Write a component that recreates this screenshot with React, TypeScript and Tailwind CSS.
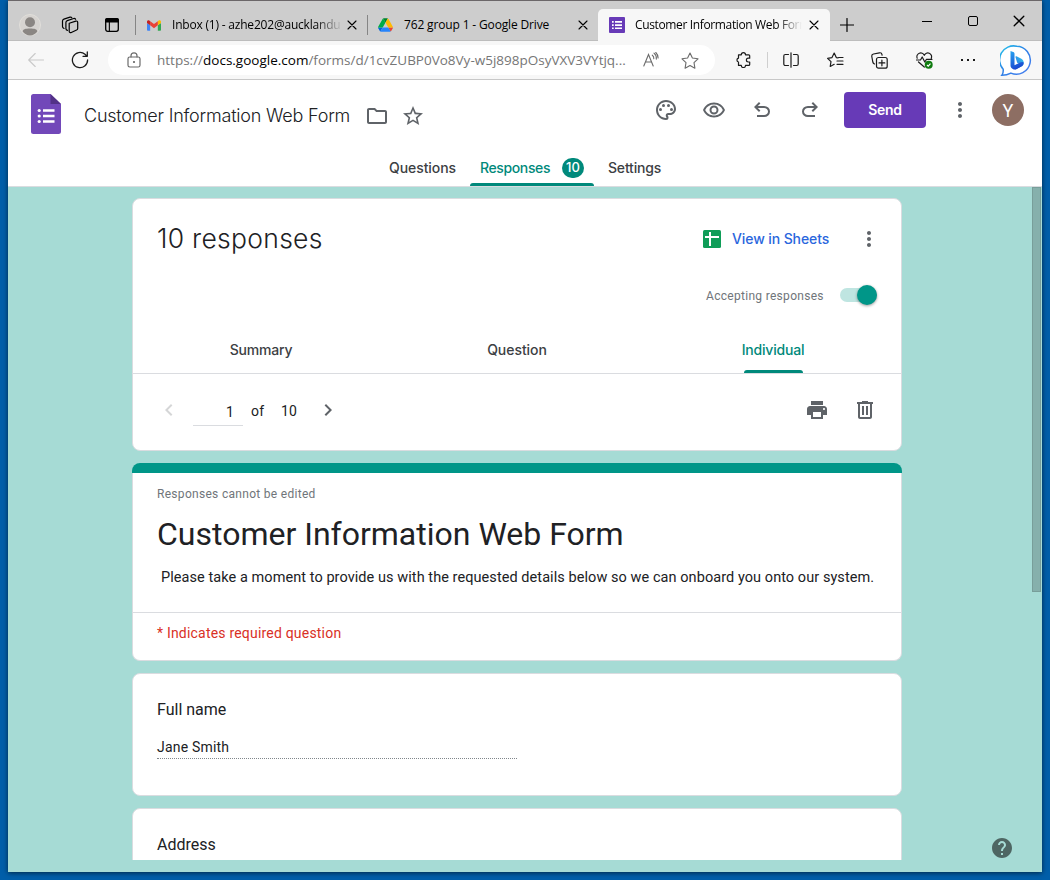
import React from "react";
import {
  MdOutlinePalette,
  MdOutlineRemoveRedEye,
  MdOutlineFolder,
  MdStarBorder,
  MdMoreVert,
  MdPrint,
  MdChevronLeft,
  MdChevronRight,
  MdHelp,
} from "react-icons/md";

type StrokeProps = {
  className: string;
  viewBox: string;
  width?: number;
  children: React.ReactNode;
};

function Stroke({ className, viewBox, width = 1, children }: StrokeProps) {
  return (
    <svg
      className={className}
      viewBox={viewBox}
      fill="none"
      stroke="currentColor"
      strokeWidth={width}
      strokeLinecap="round"
      strokeLinejoin="round"
    >
      {children}
    </svg>
  );
}

function CloseGlyph({ className }: { className: string }) {
  return (
    <Stroke className={className} viewBox="0 0 10 10" width={1.1}>
      <path d="M1 1l8 8M9 1l-8 8" />
    </Stroke>
  );
}

function GmailLogo() {
  return (
    <svg className="h-[11px] w-[14px] shrink-0" viewBox="52 42 88 66">
      <path fill="#4285f4" d="M58 108h14V74L52 59v43c0 3.32 2.69 6 6 6" />
      <path fill="#34a853" d="M120 108h14c3.32 0 6-2.69 6-6V59l-20 15" />
      <path fill="#fbbc04" d="M120 48v26l20-15v-8c0-7.42-8.47-11.65-14.4-7.2" />
      <path fill="#ea4335" d="M72 74V48l24 18 24-18v26L96 92" />
      <path fill="#c5221f" d="M52 51v8l20 15V48l-5.6-4.2c-5.94-4.45-14.4-.22-14.4 7.2" />
    </svg>
  );
}

function DriveLogo() {
  return (
    <svg className="h-[14px] w-[15px] shrink-0" viewBox="0 0 87.3 78">
      <path fill="#0066da" d="m6.6 66.85 3.85 6.65c.8 1.4 1.95 2.5 3.3 3.3l13.75-23.8h-27.5c0 1.55.4 3.1 1.2 4.5z" />
      <path fill="#00ac47" d="m43.65 25-13.75-23.8c-1.35.8-2.5 1.9-3.3 3.3l-25.4 44a9.06 9.06 0 0 0-1.2 4.5h27.5z" />
      <path fill="#ea4335" d="m73.55 76.8c1.35-.8 2.5-1.9 3.3-3.3l1.6-2.75 7.65-13.25c.8-1.4 1.2-2.95 1.2-4.5h-27.502l5.852 11.5z" />
      <path fill="#00832d" d="m43.65 25 13.75-23.8c-1.35-.8-2.9-1.2-4.5-1.2h-18.5c-1.6 0-3.15.45-4.5 1.2z" />
      <path fill="#2684fc" d="m59.8 53h-32.3l-13.75 23.8c1.35.8 2.9 1.2 4.5 1.2h50.8c1.6 0 3.15-.45 4.5-1.2z" />
      <path fill="#ffba00" d="m73.4 26.5-12.7-22c-.8-1.4-1.95-2.5-3.3-3.3l-13.75 23.8 16.15 28h27.45c0-1.55-.4-3.1-1.2-4.5z" />
    </svg>
  );
}

function FormsFavicon() {
  return (
    <svg className="h-4 w-4 shrink-0" viewBox="0 0 16 16">
      <rect width="16" height="16" rx="1" fill="#673ab7" />
      <path fill="#fff" d="M3 4h1.7v1.7H3zM6 4h7v1.7H6zM3 7.2h1.7v1.7H3zM6 7.2h7v1.7H6zM3 10.4h1.7v1.7H3zM6 10.4h7v1.7H6z" />
    </svg>
  );
}

function BingLogo() {
  return (
    <svg className="h-[32px] w-[32px] shrink-0" viewBox="0 0 32 32">
      <defs>
        <linearGradient id="ring" x1="0" y1="0" x2="1" y2="1">
          <stop offset="0" stopColor="#22c4ea" />
          <stop offset="0.5" stopColor="#2f7fe6" />
          <stop offset="1" stopColor="#4a7ff0" />
        </linearGradient>
        <linearGradient id="bee" x1="0" y1="0" x2="0.3" y2="1">
          <stop offset="0" stopColor="#27a5f2" />
          <stop offset="1" stopColor="#1b49d0" />
        </linearGradient>
        <linearGradient id="bowl" x1="1" y1="0" x2="0" y2="1">
          <stop offset="0" stopColor="#35c9f0" />
          <stop offset="1" stopColor="#2565e0" />
        </linearGradient>
      </defs>
      <path
        d="M16.500 1.200a14 14 0 1 1-5.600 26.900c-2.600 1.400-5.600 2.200-9 2.200 1.300-1.600 1.500-3.400 1.300-6A14 14 0 0 1 16.500 1.200z"
        fill="#fff"
        stroke="url(#ring)"
        strokeWidth="1.500"
      />
      <path fill="url(#bowl)" d="M15.500 12.200c-.3-.8.3-1.200 1-.9l4.400 2.200c1.800.9 2.800 2.300 2.800 4.200 0 1.300-.4 2.300-1.200 3.200l-8 3.900 3.900-4.700 1.500-1.100-2.700-1.300z" />
      <path fill="url(#bee)" d="M10.500 6l2.700.9c1 .4 1.300 1 1.300 1.900v11.400l4.500-2.300c2.400-1 4.600-1.100 4.700-.2 0 1.700-.9 2.800-2.400 3.700l-4.400 2.600c-1.300.8-2.800.8-4.100 0-1.500-.9-2.300-1.900-2.300-3.400z" />
    </svg>
  );
}

function TabStrip() {
  return (
    <div className="flex h-[41px] shrink-0 items-start border-t border-[#6b6769] bg-[#cdcdcd] text-black">
      <div className="flex h-[40px] w-full items-start border-b border-[#bdbdbd] pt-[8px]">
        <div className="flex h-[32px] items-center">
          <svg className="ml-[11px] h-[22px] w-[22px] shrink-0" viewBox="0 0 22 22">
            <circle cx="11" cy="11" r="10.500" fill="#d6d3d0" stroke="#e0deda" />
            <circle cx="11" cy="8.200" r="5" fill="#8a8683" />
            <path fill="#8a8683" d="M3.600 17.200c1-2 2.600-2.600 7.400-2.600s6.400.6 7.400 2.600c-1.600 2.600-4.400 4.200-7.400 4.200s-5.800-1.600-7.400-4.200z" />
          </svg>
          <Stroke className="ml-[20px] h-[18px] w-[18px] shrink-0" viewBox="0 0 18 18" width={1.2}>
            <path d="M8.200 7.200l6.600-2.100c1-.3 1.900.3 1.900 1.300v6c0 .8-.4 1.300-1.100 1.600l-5.300 2.500c-1 .4-2.100-.2-2.100-1.300z" />
            <path d="M6.500 14.300c-1-.2-1.600-.9-1.600-1.900V6.500c0-1 .5-1.600 1.400-1.900l6.400-2.100c.9-.2 1.500.1 1.900.8" />
            <path d="M3 12.500c-.9-.3-1.500-.9-1.500-1.900V4.900c0-.9.500-1.500 1.400-1.800L9 1.100c.8-.2 1.400 0 1.800.7" />
          </Stroke>
          <svg className="ml-[26px] h-[14px] w-[14px] shrink-0" viewBox="0 0 14 14">
            <rect x="0.700" y="0.700" width="12.600" height="12.600" rx="2" fill="none" stroke="#000" strokeWidth="1.300" />
            <path d="M2 0h10a2 2 0 0 1 2 2v2.600H0V2a2 2 0 0 1 2-2zM3.800 4h1.100v9.500H3.800z" />
          </svg>
          <div className="ml-[16px] h-[20px] w-px bg-[#858585]" />
        </div>

        <div className="flex h-[32px] items-center font-['Open_Sans',sans-serif] text-[12px] whitespace-nowrap">
          <div className="flex w-[231px] items-center pl-[11px]">
            <GmailLogo />
            <span className="ml-[11px] w-[168px] bg-gradient-to-r from-black from-85% to-black/10 bg-clip-text tracking-[-0.2px] text-transparent">
              Inbox (1) - azhe202@aucklandu
            </span>
            <CloseGlyph className="ml-[7px] h-[10px] w-[10px]" />
          </div>
          <div className="h-[20px] w-px bg-[#858585]" />
          <div className="flex w-[230px] items-center pl-[10px]">
            <DriveLogo />
            <span className="ml-[11px] w-[168px] tracking-[-0.15px]">762 group 1 - Google Drive</span>
            <CloseGlyph className="ml-[6px] h-[10px] w-[10px]" />
          </div>
          <div className="flex h-[32px] w-[232px] items-center rounded-t-[5px] bg-[#f7f7f7] pl-[11px]">
            <FormsFavicon />
            <span className="ml-[10px] w-[167px] overflow-hidden bg-gradient-to-r from-black from-85% to-transparent bg-clip-text tracking-[-0.36px] text-transparent">
              Customer Information Web Form
            </span>
            <CloseGlyph className="ml-[7px] h-[10px] w-[10px]" />
          </div>
          <Stroke className="ml-[10px] h-[14px] w-[14px]" viewBox="0 0 14 14" width={1.2}>
            <path d="M7 .5v13M.5 7h13" />
          </Stroke>
        </div>

        <div className="ml-[68px] flex h-[24px] items-center">
          <div className="h-px w-[10px] bg-black" />
          <div className="ml-[36px] h-[10px] w-[10px] rounded-[2px] border border-black" />
          <CloseGlyph className="ml-[35px] h-[12px] w-[12px]" />
        </div>
      </div>
    </div>
  );
}

function AddressBar() {
  return (
    <div className="flex h-[39px] shrink-0 items-center border-b border-[#c8c8c8] bg-[#f7f7f7] text-[#1b1b1b]">
      <Stroke className="ml-[20px] h-[16px] w-[16px] shrink-0 text-[#c9c9c9]" viewBox="0 0 16 16" width={1.1}>
        <path d="M15.500 8H.8M7.200 1.500L.7 8l6.500 6.500" />
      </Stroke>
      <Stroke className="ml-[27px] h-[18px] w-[18px] shrink-0" viewBox="0 0 18 18" width={1.3}>
        <path d="M16.600 9a7.600 7.600 0 1 1-2.600-5.700l2 1.900M16.300 1v4.300h-4.300" />
      </Stroke>

      <div className="ml-[19px] flex h-[30px] w-[607px] items-center rounded-full bg-white pl-[19px]">
        <Stroke className="h-[16px] w-[14px] shrink-0 text-[#6b6b6b]" viewBox="0 0 14 16" width={1.2}>
          <rect x="1" y="5" width="12" height="10" rx="1.800" />
          <path d="M4 5V3.800a3 3 0 0 1 6 0V5" />
          <circle cx="7" cy="10" r="0.500" fill="currentColor" />
        </Stroke>
        <span className="ml-[16px] w-[470px] font-['Open_Sans',sans-serif] text-[13.500px] whitespace-nowrap text-[#767676]">
          https://<span className="text-black">docs.google.com</span>/forms/d/1cvZUBP0Vo8Vy-w5j898pOsyVXV3VYtjq...
        </span>
        <svg className="ml-[16px] h-[16px] w-[16px] shrink-0 text-[#6b6b6b]" viewBox="0 0 16 16" fill="none" stroke="currentColor" strokeWidth="1.100" strokeLinecap="round">
          <path d="M.8 14L5.500 2.500 10.200 14M2.400 10h6.200" />
          <path d="M9.300 3.200a4 4 0 0 1 1.500 3.600M11 1.200a6.500 6.500 0 0 1 2.300 6" />
          <path d="M12.800 .5a8 8 0 0 1 2.300 5.500" />
        </svg>
        <Stroke className="ml-[22px] h-[17px] w-[18px] shrink-0 text-[#6b6b6b]" viewBox="0 0 18 17" width={1.1}>
          <path d="M9 1l2.400 5 5.600.8-4 3.900.9 5.500L9 13.600l-4.900 2.600.9-5.500-4-3.900L6.600 6z" />
        </Stroke>
      </div>

      <Stroke className="ml-[21px] h-[16px] w-[16px] shrink-0" viewBox="0 0 16 16" width={1.2}>
        <path d="M2.500 2.800H5.300a2.100 2.100 0 0 1 4.200 0h3.200a1 1 0 0 1 1 1v2.400h-1.400a1.900 1.900 0 0 0 0 3.800h1.400v2.400a1 1 0 0 1-1 1H9.500a2.100 2.100 0 0 1-4.200 0H2.500V10a2 2 0 0 1 0-3.900z" />
      </Stroke>
      <div className="ml-[15px] h-[16px] w-px bg-[#cfcfcf]" />
      <Stroke className="ml-[15px] h-[16px] w-[16px] shrink-0" viewBox="0 0 16 16" width={1.2}>
        <path d="M5.500 2.500H2.300A1.500 1.500 0 0 0 .8 4v8a1.500 1.500 0 0 0 1.500 1.500h3.200M10.500 2.500h3.200A1.500 1.500 0 0 1 15.200 4v8a1.500 1.500 0 0 1-1.500 1.500h-3.200M8 .8v14.400" />
      </Stroke>
      <Stroke className="ml-[28px] h-[16px] w-[17px] shrink-0" viewBox="0 0 17 16" width={1.2}>
        <path d="M11 5.900l-1.700-.3L7.200 1 5 5.600l-4.400.7L4 9.700l-.8 4.800 4-2.200M11.500 5.500H16M10 9H16M10 12.300H16" />
      </Stroke>
      <Stroke className="ml-[27px] h-[17px] w-[17px] shrink-0" viewBox="0 0 17 17" width={1.2}>
        <rect x="5.500" y="5.500" width="10.700" height="10.700" rx="2" />
        <path d="M10.900 8v5.800M8 10.900h5.800M3.500 12A3 3 0 0 1 1.800 10L.8 4.500A2.200 2.200 0 0 1 2.500 2L8.500.8A2.200 2.200 0 0 1 11 2.600l.1.600" />
      </Stroke>
      <svg className="ml-[28px] h-[17px] w-[17px] shrink-0" viewBox="0 0 17 17" fill="none">
        <path
          d="M1.200 6.200A3.700 3.700 0 0 1 8.300 3.300a3.700 3.700 0 0 1 7 2.900M.5 8h4L6.200 5l2.600 5L10.500 7.300H16M2.500 10l5.800 5"
          stroke="#1b1b1b"
          strokeWidth="1.200"
          strokeLinecap="round"
          strokeLinejoin="round"
        />
        <circle cx="12.700" cy="12.700" r="4" fill="#107c10" />
        <path d="M11 13l1.200 1.100 2.300-2.500" stroke="#fff" strokeWidth="1.100" />
      </svg>
      <div className="ml-[28px] flex w-[14px] justify-between">
        <span className="h-[2px] w-[2px] bg-[#1b1b1b]" />
        <span className="h-[2px] w-[2px] bg-[#1b1b1b]" />
        <span className="h-[2px] w-[2px] bg-[#1b1b1b]" />
      </div>
      <div className="ml-[25px] pt-[1px]">
        <BingLogo />
      </div>
    </div>
  );
}

const UNDO =
  "M7 19v-2h7.100q1.575 0 2.737-1Q18 15 18 13.500T16.838 11Q15.675 10 14.100 10H7.800l2.600 2.600L9 14 4 9l5-5 1.400 1.400L7.800 8h6.300q2.425 0 4.163 1.575Q20 11.150 20 13.500q0 2.350-1.737 3.925Q16.525 19 14.100 19Z";

function FormHeader() {
  return (
    <header className="flex h-[107px] shrink-0 flex-col border-b border-[#dadce0] bg-white font-[Inter,sans-serif]">
      <div className="flex h-[72px] shrink-0 items-start text-[#5f6368]">
        <svg className="mt-[14px] ml-[23px] h-[40px] w-[30px] shrink-0" viewBox="0 0 30 40">
          <path fill="#7248b9" d="M2.500 0H19.500L30 10v27.500a2.500 2.500 0 0 1-2.500 2.500h-25A2.500 2.500 0 0 1 0 37.500v-35A2.500 2.500 0 0 1 2.500 0z" />
          <path fill="#533287" d="M19.500 0L30 10H19.500z" />
          <g fill="#fff">
            <circle cx="8.200" cy="16.500" r="1.600" />
            <circle cx="8.200" cy="22" r="1.600" />
            <circle cx="8.200" cy="27.500" r="1.600" />
            <path d="M12 15.300h11.500v2.400H12zM12 20.800h11.500v2.400H12zM12 26.300h11.500v2.400H12z" />
          </g>
        </svg>
        <div className="ml-[23px] flex h-[72px] items-center">
          <h1 className="w-[269px] pb-[2px] text-[18px] font-[350] tracking-[-0.21px] whitespace-nowrap text-[#202124]">
            Customer Information Web Form
          </h1>
          <MdOutlineFolder className="ml-[12px] h-[24px] w-[24px]" />
          <MdStarBorder className="ml-[12px] h-[24px] w-[24px]" />
        </div>
        <div className="ml-[229px] flex h-[60px] items-center">
          <MdOutlinePalette className="h-[24px] w-[24px]" />
          <MdOutlineRemoveRedEye className="ml-[24px] h-[24px] w-[24px]" />
          <svg className="ml-[24px] h-[24px] w-[24px]" viewBox="0 0 24 24" fill="currentColor">
            <path d={UNDO} />
          </svg>
          <svg className="ml-[24px] h-[24px] w-[24px] -scale-x-100" viewBox="0 0 24 24" fill="currentColor">
            <path d={UNDO} />
          </svg>
          <button className="ml-[22px] h-[36px] w-[82px] rounded-[4px] bg-[#673ab7] pb-[1px] text-[14px] font-semibold tracking-[-0.3px] text-white">
            Send
          </button>
          <MdMoreVert className="ml-[22px] h-[24px] w-[24px]" />
          <div className="ml-[20px] flex h-[32px] w-[32px] items-center justify-center rounded-full bg-[#8d6e63] font-[Roboto,sans-serif] text-[18px] text-white">
            Y
          </div>
        </div>
      </div>
      <nav className="flex h-[34px] items-stretch pl-[381px] text-[14px] font-[450] text-[#3c4043]">
        <span className="flex w-[81px] items-center pb-[4px] tracking-[-0.08px]">Questions</span>
        <div className="flex w-[124px] flex-col text-[#00897b]">
          <div className="flex h-[31px] items-center pt-[1px] pl-[10px]">
            <span className="w-[82px] pb-[2px] tracking-[-0.38px]">Responses</span>
            <span className="flex h-[20px] w-[22px] items-center justify-center rounded-full bg-[#00897b] text-[13px] font-medium text-white">
              10
            </span>
          </div>
          <div className="h-[3px] rounded-t-[3px] bg-[#00897b]" />
        </div>
        <span className="flex items-center pb-[4px] pl-[14px] tracking-[-0.18px]">Settings</span>
      </nav>
    </header>
  );
}

function ResponsesCard() {
  return (
    <section className="flex h-[253px] shrink-0 flex-col rounded-[8px] border border-[#dadce0] bg-white font-[Inter,sans-serif] text-[#5f6368]">
      <div className="flex h-[80px] items-center">
        <h2 className="w-[569px] pl-[24px] text-[26.500px] font-[350] tracking-[0.28px] text-[#202124]">10 responses</h2>
        <svg className="ml-[1px] h-[18px] w-[18px]" viewBox="0 0 18 18">
          <rect width="18" height="18" rx="1.500" fill="#0f9d58" />
          <path d="M6 2h2v4h8v2H8v8H6V8H2V6h4z" fill="#fff" />
        </svg>
        <span className="ml-[11px] w-[100px] pb-[2px] text-[14px] font-[450] tracking-[-0.1px] whitespace-nowrap text-[#2a66dd]">
          View in Sheets
        </span>
        <MdMoreVert className="ml-[25px] h-[24px] w-[24px]" />
      </div>
      <div className="flex h-[32px] items-center pl-[573px]">
        <span className="w-[134px] pt-[2px] font-[Roboto,sans-serif] text-[12px] tracking-[0.3px] whitespace-nowrap text-[#70757a]">
          Accepting responses
        </span>
        <div className="flex h-[14px] w-[37px] items-center justify-end rounded-full bg-[#bfe5e1]">
          <div className="h-[20px] w-[20px] shrink-0 rounded-full bg-[#009688] shadow-[0_1px_3px_rgba(0,0,0,0.4)]" />
        </div>
      </div>
      <div className="grid h-[63px] grid-cols-3 border-b border-[#dadce0] text-center text-[14px] font-[450] tracking-[-0.18px] text-[#3c4043]">
        <span className="pt-[28px]">Summary</span>
        <span className="pt-[28px] tracking-[-0.05px]">Question</span>
        <div className="flex flex-col items-center justify-between pt-[28px] text-[#00897b]">
          <span>Individual</span>
          <span className="h-[3px] w-[59px] rounded-t-[3px] bg-[#00897b]" />
        </div>
      </div>
      <div className="flex h-[72px] items-center font-[Roboto,sans-serif] text-[14px] tracking-[0.2px] text-[#202124]">
        <MdChevronLeft className="ml-[24px] h-[24px] w-[24px] text-[#d5d6d7]" />
        <div className="mt-[2px] ml-[12px] flex h-[30px] w-[50px] items-center justify-end border-b border-[#dadce0] pt-[3px] pr-[9px]">
          1
        </div>
        <span className="mt-[2px] ml-[8px] w-[30px]">of</span>
        <span className="mt-[2px] w-[35px]">10</span>
        <MdChevronRight className="h-[24px] w-[24px] text-[#5f6368]" />
        <MdPrint className="ml-[465px] h-[24px] w-[24px] text-[#5f6368]" />
        <svg className="ml-[24px] h-[24px] w-[24px] text-[#5f6368]" viewBox="0 0 24 24" fill="currentColor">
          <path d="M15 4V3H9v1H4v2h1v13c0 1.100.9 2 2 2h10c1.100 0 2-.9 2-2V6h1V4h-5zm2 15H7V6h10v13zM9 8h2v9H9zm4 0h2v9h-2z" />
        </svg>
      </div>
    </section>
  );
}

function FormIntroCard() {
  return (
    <section className="flex h-[198px] shrink-0 flex-col text-[#202124]">
      <div className="h-[10px] rounded-t-[8px] bg-[#009688]" />
      <div className="flex h-[188px] flex-col rounded-b-[8px] border-x border-b border-[#dadce0] bg-white">
        <div className="flex h-[140px] flex-col border-b border-[#dadce0] pl-[24px] whitespace-nowrap">
          <p className="mt-[13px] text-[12px] leading-[16px] tracking-[0.3px] text-[#70757a]">Responses cannot be edited</p>
          <h2 className="mt-[12px] text-[32px] leading-[40px]">Customer Information Web Form</h2>
          <p className="mt-[13px] pl-[4px] text-[14.500px] leading-[22px] tracking-[0.065px]">
            Please take a moment to provide us with the requested details below so we can onboard you onto our system.
          </p>
        </div>
        <p className="pt-[10px] pl-[24px] text-[14px] leading-[20px] tracking-[0.2px] text-[#d93025]">
          * Indicates required question
        </p>
      </div>
    </section>
  );
}

export default function App() {
  return (
    <div className="flex h-[880px] w-[1050px] overflow-hidden bg-[#005ea9] px-[8px] font-[Roboto,sans-serif]">
      <div className="relative flex h-[872px] w-[1034px] flex-col bg-[#a6dbd5] shadow-[0_1px_5px_rgba(0,0,0,0.6)]">
        <TabStrip />
        <AddressBar />
        <FormHeader />
        <div className="flex h-[685px]">
          <main className="ml-[124px] flex h-[673px] w-[770px] flex-col gap-[12px] overflow-hidden pt-[11px]">
            <ResponsesCard />
            <FormIntroCard />
            <section className="h-[123px] shrink-0 rounded-[8px] border border-[#dadce0] bg-white px-[24px] text-[#202124]">
              <h3 className="pt-[24px] text-[16px] leading-[24px]">Full name</h3>
              <p className="mt-[13px] h-[24px] w-[360px] border-b border-dotted border-[#80868b] text-[14px] leading-[24px] tracking-[0.2px]">
                Jane Smith
              </p>
            </section>
            <section className="h-[123px] shrink-0 rounded-[8px] border border-[#dadce0] bg-white px-[24px] text-[#202124]">
              <h3 className="pt-[24px] text-[16px] leading-[24px]">Address</h3>
            </section>
          </main>
          <div className="mr-px ml-auto h-[405px] w-[9px] border border-[#789e9a] bg-[#86b0ac]" />
        </div>
        <MdHelp className="absolute right-[28px] bottom-[12px] h-[24px] w-[24px] text-[#4e6663]" />
      </div>
    </div>
  );
}
